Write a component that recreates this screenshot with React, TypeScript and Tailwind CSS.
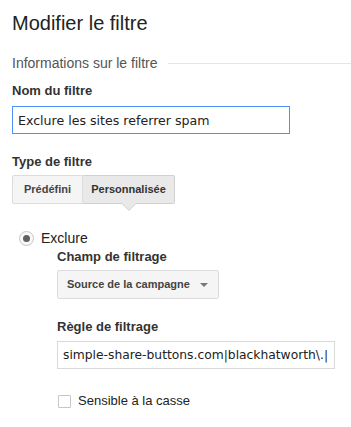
import React from 'react';

const App = () => {
  return (
    <div className="w-[351px] h-[427px] bg-white overflow-hidden font-['Liberation_Sans',Arial,sans-serif] text-[#222]">
      <div className="pl-3 pt-[11px]">
        {/* Title */}
        <h1 className="text-[20px] leading-[24px] text-[#222]">Modifier le filtre</h1>

        {/* Section header */}
        <div className="flex items-center mt-[20px]">
          <span className="text-[14px] leading-[17px] text-[#555] whitespace-nowrap">Informations sur le filtre</span>
          <div className="flex-1 h-px bg-[#e5e5e5] ml-[10px]"></div>
        </div>

        {/* Filter name */}
        <div className="mt-[11px] text-[13px] leading-[16px] font-bold text-[#333]">Nom du filtre</div>
        <input
          readOnly
          value="Exclure les sites referrer spam"
          className="mt-[7px] w-[278px] h-[28px] border border-[#4d90fe] px-[5px] text-[12.6px] font-['DejaVu_Sans',Verdana,sans-serif] text-[#222] outline-none block"
        />

        {/* Filter type */}
        <div className="mt-[20px] text-[13px] leading-[16px] font-bold text-[#333]">Type de filtre</div>
        <div className="mt-[5px] flex">
          <div className="w-[71px] h-[29px] flex items-center justify-center bg-[#f5f5f5] border border-[#dcdcdc] rounded-l-[2px] text-[11px] font-bold text-[#444]">
            Prédéfini
          </div>
          <div className="relative w-[92px] h-[29px] flex items-center justify-center bg-[#e9e9e9] border border-l-0 border-[#d0d0d0] rounded-r-[2px] text-[11px] font-bold text-[#333]">
            Personnalisée
            <div className="absolute left-1/2 -bottom-[8px] -translate-x-1/2 w-0 h-0 border-l-[8px] border-r-[8px] border-t-[8px] border-l-transparent border-r-transparent border-t-[#d0d0d0]"></div>
            <div className="absolute left-1/2 -bottom-[7px] -translate-x-1/2 w-0 h-0 border-l-[7px] border-r-[7px] border-t-[7px] border-l-transparent border-r-transparent border-t-[#e9e9e9]"></div>
          </div>
        </div>

        {/* Exclude radio */}
        <div className="mt-[26px] ml-[7px] flex items-center">
          <div className="w-[15px] h-[15px] rounded-full border border-[#c6c6c6] bg-[#f8f8f8] flex items-center justify-center">
            <div className="w-[7px] h-[7px] rounded-full bg-[#606060]"></div>
          </div>
          <span className="ml-[7px] text-[14px] leading-[16px] text-[#222]">Exclure</span>
        </div>

        <div className="ml-[45px]">
          <div className="mt-[3px] text-[13px] leading-[16px] font-bold text-[#333]">Champ de filtrage</div>
          <div className="mt-[5px] w-[162px] h-[29px] flex items-center justify-between bg-[#f5f5f5] border border-[#dcdcdc] rounded-[2px] pl-[9px] pr-[10px]">
            <span className="text-[11px] font-bold text-[#444]">Source de la campagne</span>
            <div className="w-0 h-0 border-l-[4px] border-r-[4px] border-t-[4px] border-l-transparent border-r-transparent border-t-[#777]"></div>
          </div>

          <div className="mt-[20px] text-[13px] leading-[16px] font-bold text-[#333]">Règle de filtrage</div>
          <div className="mt-[6px] w-[278px] h-[28px] border border-[#d9d9d9] pl-[5px] flex items-center overflow-hidden whitespace-nowrap text-[12.3px] font-['DejaVu_Sans',Verdana,sans-serif] text-[#222]">
            simple-share-buttons.com|blackhatworth\.|
          </div>

          <div className="mt-[24px] flex items-center">
            <div className="ml-px w-[13px] h-[13px] border border-[#c6c6c6] rounded-[1px] bg-white"></div>
            <span className="ml-[7px] text-[13px] leading-[16px] text-[#222]">Sensible à la casse</span>
          </div>
        </div>
      </div>
    </div>
  );
};

export default App;
